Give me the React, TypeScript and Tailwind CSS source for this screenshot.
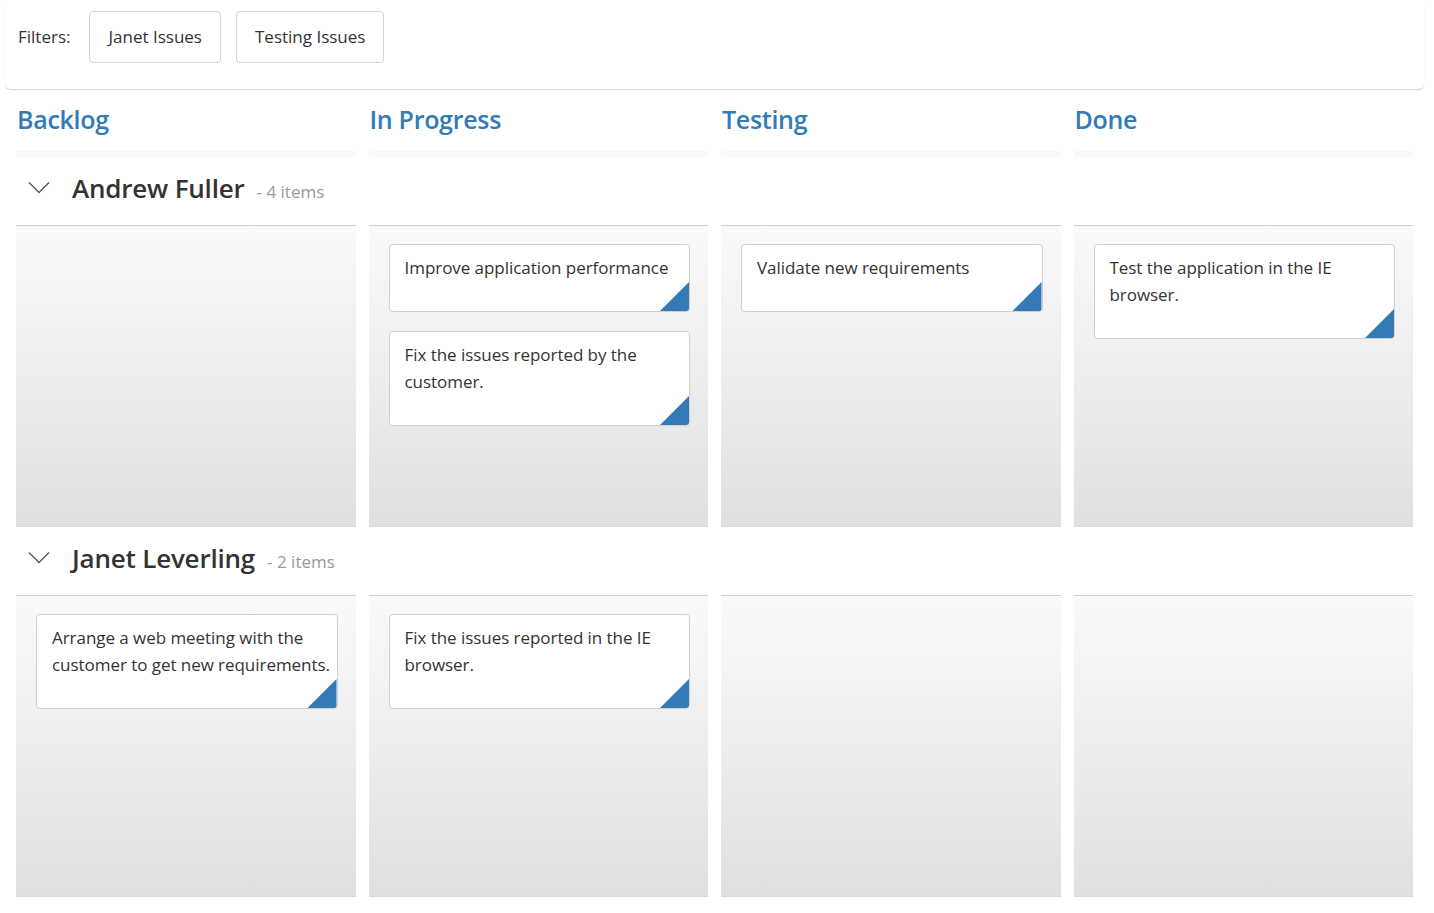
import React from 'react';

type Card = { id: number; text: string };

const columns = ['Backlog', 'In Progress', 'Testing', 'Done'];

const lanes: { name: string; cells: Card[][] }[] = [
  {
    name: 'Andrew Fuller',
    cells: [
      [],
      [
        { id: 1, text: 'Improve application performance' },
        { id: 2, text: 'Fix the issues reported by the customer.' },
      ],
      [{ id: 3, text: 'Validate new requirements' }],
      [{ id: 4, text: 'Test the application in the IE browser.' }],
    ],
  },
  {
    name: 'Janet Leverling',
    cells: [
      [{ id: 5, text: 'Arrange a web meeting with the customer to get new requirements.' }],
      [{ id: 6, text: 'Fix the issues reported in the IE browser.' }],
      [],
      [],
    ],
  },
];

function Chevron() {
  return (
    <svg width="22" height="13" viewBox="0 0 22 13" fill="none" className="mb-[7px] shrink-0">
      <path d="M1 1.5L11 11.5L21 1.5" stroke="#555" strokeWidth="1.3" />
    </svg>
  );
}

function KanbanCard({ text }: { text: string }) {
  return (
    <div className="relative overflow-hidden rounded-[4px] border border-[#cfcfcf] bg-white pl-[15px] pr-[1px] pt-[9px] pb-[30px] text-[17px] leading-[27px] tracking-[-0.05px] text-[#333]">
      {text}
      <div className="absolute bottom-0 right-0 h-[29px] w-[29px] bg-[#337ab7] [clip-path:polygon(100%_0,100%_100%,0_100%)]" />
    </div>
  );
}

export default function App() {
  return (
    <div className="min-h-screen bg-white font-['Open_Sans',sans-serif] text-[#333]">
      <div className="ml-[5px] mr-[10px] h-[89px] rounded-b-[6px] px-[13px] pt-[11px] shadow-[0_1px_1px_rgba(0,0,0,0.18)]">
        <div className="flex h-[52px] items-center">
          <span className="mr-[19px] text-[17px]">Filters:</span>
          <div className="flex gap-[15px]">
            <button className="h-[52px] rounded-[4px] border border-[#d4d4d4] bg-white px-[18px] text-[17px] text-[#333]">
              Janet Issues
            </button>
            <button className="h-[52px] rounded-[4px] border border-[#d4d4d4] bg-white px-[18px] text-[17px] text-[#333]">
              Testing Issues
            </button>
          </div>
        </div>
      </div>

      <div className="pl-4 pr-[21px]">
        <div className="grid grid-cols-4 gap-x-[13px]">
          {columns.map((c) => (
            <div key={c} className="flex h-[68px] flex-col">
              <div className="pl-px pt-[12px] text-[25px] font-semibold leading-[36px] tracking-[-0.3px] text-[#337ab7]">
                {c}
              </div>
              <div className="mt-auto h-[6px] bg-[#f9f9f9]" />
            </div>
          ))}
        </div>

        {lanes.map((lane) => {
          const count = lane.cells.reduce((n, c) => n + c.length, 0);
          return (
            <div key={lane.name}>
              <div className="flex h-[68px] items-center pl-[12px]">
                <Chevron />
                <div className="ml-[22px] flex items-baseline pb-[6px]">
                  <span className="text-[26px] font-semibold leading-[34px] tracking-[-0.2px] text-[#333]">
                    {lane.name}
                  </span>
                  <span className="ml-[12px] text-[17px] text-[#999]">- {count} items</span>
                </div>
              </div>
              <div className="grid grid-cols-4 gap-x-[13px]">
                {lane.cells.map((cards, i) => (
                  <div
                    key={i}
                    className="flex h-[302px] flex-col gap-[19px] border-t border-b border-[#cfcfcf] border-b-[#d9d9d9] bg-gradient-to-b from-[#fafafa] to-[#e0e0e0] pl-[20px] pr-[18px] pt-[18px]"
                  >
                    {cards.map((card) => (
                      <KanbanCard key={card.id} text={card.text} />
                    ))}
                  </div>
                ))}
              </div>
            </div>
          );
        })}
      </div>
    </div>
  );
}
